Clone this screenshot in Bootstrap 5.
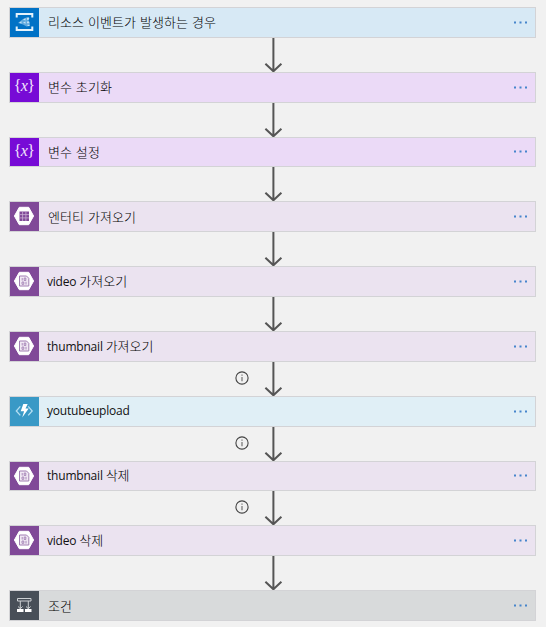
<!DOCTYPE html>
<html lang="ko">
<head>
<meta charset="utf-8">
<meta name="viewport" content="width=device-width, initial-scale=1">
<title>Logic App</title>
<link href="https://cdn.jsdelivr.net/npm/bootstrap@5.3.0/dist/css/bootstrap.min.css" rel="stylesheet">
<style>
body{background:#f1f1f1;font-family:"Open Sans","Noto Sans CJK KR",sans-serif;font-size:12px;line-height:16px;color:#111;overflow:hidden}
.flow{padding:7px 9.600px 0 9px}
.step{height:30.8px;border:1px solid #d3d3d6;background:var(--tint)}
.step-icon{width:29px;height:100%;background:var(--tone);flex:none}
.step-icon svg{width:28px;height:28px;display:block}
.step-name{padding-left:8px;white-space:nowrap;letter-spacing:-.2px}
.ko{font-family:"Noto Sans CJK KR",sans-serif;font-size:13px;font-weight:300;color:#000;letter-spacing:0}
.step-name.ko{padding-left:9px;letter-spacing:.1px}
.step-menu{width:14px;height:3px;margin-right:7px}
.link{height:34px}
.link .arrow{width:20px;height:34px;display:block}
.link .info{width:14px;height:14px;left:226px;top:9px}
.event{--tint:#d7e9f5;--tone:#0072c6}
.variable{--tint:#ebdaf7;--tone:#770bd6}
.storage{--tint:#ebe3f0;--tone:#804998}
.function{--tint:#e0eff6;--tone:#3999c6}
.condition{--tint:#d8dadb;--tone:#484f58}
</style>
<script src="https://cdn.jsdelivr.net/npm/bootstrap@5.3.0/dist/js/bootstrap.bundle.min.js"></script>
</head>
<body>
<svg class="d-none">
<symbol id="i-event" viewBox="0 0 28 28"><path d="M6.700 9.500V6h15.600v3.500M6.700 18.500V22h15.600v-3.500" fill="none" stroke="#e4f2fb" stroke-width="2"/><path d="M8 15l5-4 4.500-2 2 1-1 2.500 1.500 2-.5 3.500-3 .5-3.500-2z" fill="#5fa9de"/><path d="M9 14.800l2.500-1.600v2.300zM13 11.500l2.500-1.300v2.300zM13 14.500l2.500-1v2.300zM17 10l2-.4v2l-2 .5zM17 13.500h2v1.800h-2zM17.500 16.700h2v1.300h-2z" fill="#bfe0f6"/></symbol>
<symbol id="i-var" viewBox="0 0 28 28"><g font-family="Liberation Serif, serif" font-size="16" fill="#f3e6fc" text-anchor="middle"><text x="7.500" y="18">{</text><text x="14.300" y="17.500" font-style="italic">x</text><text x="21" y="18">}</text></g></symbol>
<symbol id="i-table" viewBox="0 0 28 28"><path d="M9.300 5.300h9.400L23.600 14l-4.900 8.700H9.300L4.400 14z" fill="#fff" stroke="#fff" stroke-linejoin="round"/><path d="M9.500 9.500h9.500v9.500H9.500z" fill="#804998"/><path d="M9.500 12.600H19M9.500 15.900H19M12.600 9.500V19M15.900 9.500V19" stroke="#c9b0d4" stroke-width=".8"/></symbol>
<symbol id="i-blob" viewBox="0 0 28 28"><path d="M9.300 5.300h9.400L23.600 14l-4.900 8.700H9.300L4.400 14z" fill="#fff" stroke="#fff" stroke-linejoin="round"/><path d="M9.500 9h7l2.300 2.300V19H9.500z" fill="#f1e9f4" stroke="#a27fb3" stroke-linejoin="round"/><path d="M12.200 11v2.500M14.200 11h1.600v2.500h-1.600zM12 15h1.800v2.300H12zM16 14.800v2.700" fill="none" stroke="#a27fb3" stroke-width=".9"/></symbol>
<symbol id="i-func" viewBox="0 0 28 28"><path d="M10.300 9.300L6.300 14l4 4.400M18.200 9.300l4 4.700-4 4.400" fill="none" stroke="#b4def2" stroke-width="1.300"/><path d="M13.300 7h4.400l-2.200 4.500h3.200L12.200 20.500l1.900-6.300h-3.400z" fill="#fff"/></symbol>
<symbol id="i-cond" viewBox="0 0 28 28"><path d="M7.500 7.500h13.500v2.500H7.500zM10.300 10v8M18.300 10v8M8 15.500l2.300 2.200 2.300-2.200M16 15.500l2.300 2.200 2.300-2.200" fill="none" stroke="#cdd0d3"/><path d="M7 18h6.500v3H7zM15 18h6.500v3H15z" fill="#fff"/></symbol>
<symbol id="arrow" viewBox="0 0 20 34"><path d="M10.400 0v33M2.400 25.700l8 7.600 8-7.600" fill="none" stroke="#555" stroke-width="2"/></symbol>
<symbol id="info" viewBox="0 0 14 14"><circle cx="7" cy="7" r="6.100" fill="none" stroke="#444" stroke-width="1.100"/><path d="M7 6v4.300M7 3.600v1.200" stroke="#666" stroke-width="1.100"/></symbol>
<symbol id="dots" viewBox="0 0 14 3"><path d="M0 .5h2v2H0zM5.500 .5h2v2h-2zM11 .5h2v2h-2z" fill="#4685cc"/></symbol>
</svg>
<main class="flow d-flex flex-column">
<div class="step event d-flex align-items-center"><span class="step-icon"><svg><use href="#i-event"/></svg></span><span class="step-name ko flex-grow-1">리소스 이벤트가 발생하는 경우</span><svg class="step-menu"><use href="#dots"/></svg></div>
<div class="link d-flex justify-content-center"><svg class="arrow"><use href="#arrow"/></svg></div>
<div class="step variable d-flex align-items-center"><span class="step-icon"><svg><use href="#i-var"/></svg></span><span class="step-name ko flex-grow-1">변수 초기화</span><svg class="step-menu"><use href="#dots"/></svg></div>
<div class="link d-flex justify-content-center"><svg class="arrow"><use href="#arrow"/></svg></div>
<div class="step variable d-flex align-items-center"><span class="step-icon"><svg><use href="#i-var"/></svg></span><span class="step-name ko flex-grow-1">변수 설정</span><svg class="step-menu"><use href="#dots"/></svg></div>
<div class="link d-flex justify-content-center"><svg class="arrow"><use href="#arrow"/></svg></div>
<div class="step storage d-flex align-items-center"><span class="step-icon"><svg><use href="#i-table"/></svg></span><span class="step-name ko flex-grow-1">엔터티 가져오기</span><svg class="step-menu"><use href="#dots"/></svg></div>
<div class="link d-flex justify-content-center"><svg class="arrow"><use href="#arrow"/></svg></div>
<div class="step storage d-flex align-items-center"><span class="step-icon"><svg><use href="#i-blob"/></svg></span><span class="step-name flex-grow-1">video <span class="ko">가져오기</span></span><svg class="step-menu"><use href="#dots"/></svg></div>
<div class="link d-flex justify-content-center"><svg class="arrow"><use href="#arrow"/></svg></div>
<div class="step storage d-flex align-items-center"><span class="step-icon"><svg><use href="#i-blob"/></svg></span><span class="step-name flex-grow-1">thumbnail <span class="ko">가져오기</span></span><svg class="step-menu"><use href="#dots"/></svg></div>
<div class="link d-flex justify-content-center position-relative"><svg class="info position-absolute"><use href="#info"/></svg><svg class="arrow"><use href="#arrow"/></svg></div>
<div class="step function d-flex align-items-center"><span class="step-icon"><svg><use href="#i-func"/></svg></span><span class="step-name flex-grow-1">youtubeupload</span><svg class="step-menu"><use href="#dots"/></svg></div>
<div class="link d-flex justify-content-center position-relative"><svg class="info position-absolute"><use href="#info"/></svg><svg class="arrow"><use href="#arrow"/></svg></div>
<div class="step storage d-flex align-items-center"><span class="step-icon"><svg><use href="#i-blob"/></svg></span><span class="step-name flex-grow-1">thumbnail <span class="ko">삭제</span></span><svg class="step-menu"><use href="#dots"/></svg></div>
<div class="link d-flex justify-content-center position-relative"><svg class="info position-absolute"><use href="#info"/></svg><svg class="arrow"><use href="#arrow"/></svg></div>
<div class="step storage d-flex align-items-center"><span class="step-icon"><svg><use href="#i-blob"/></svg></span><span class="step-name flex-grow-1">video <span class="ko">삭제</span></span><svg class="step-menu"><use href="#dots"/></svg></div>
<div class="link d-flex justify-content-center"><svg class="arrow"><use href="#arrow"/></svg></div>
<div class="step condition d-flex align-items-center"><span class="step-icon"><svg><use href="#i-cond"/></svg></span><span class="step-name ko flex-grow-1">조건</span><svg class="step-menu"><use href="#dots"/></svg></div>
</main>
</body>
</html>
